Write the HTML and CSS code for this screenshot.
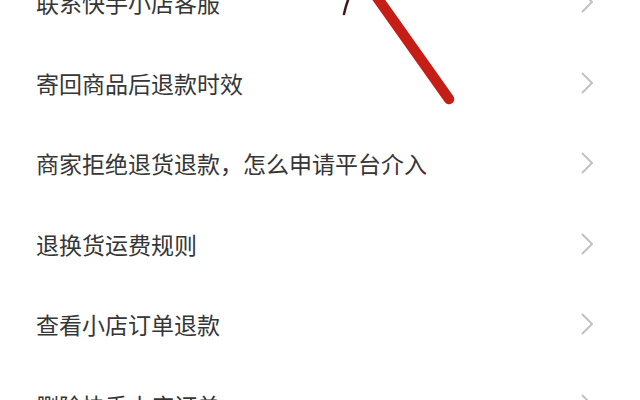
FILE: index.html
```html
<!DOCTYPE html>
<html lang="zh-CN">
<head>
    <meta charset="UTF-8">
    <meta name="viewport" content="width=device-width, initial-scale=1.0">
    <title>退款帮助</title>
    <link rel="stylesheet" href="styles.css">
</head>
<body>
    <div class="page">
        <ul class="help-list">
            <li class="help-item"><span class="help-title">联系快手小店客服</span><svg class="chevron" viewBox="0 0 12 22"><polyline points="1,1 11,11 1,21"/></svg></li>
            <li class="help-item"><span class="help-title">寄回商品后退款时效</span><svg class="chevron" viewBox="0 0 12 22"><polyline points="1,1 11,11 1,21"/></svg></li>
            <li class="help-item"><span class="help-title">商家拒绝退货退款，怎么申请平台介入</span><svg class="chevron" viewBox="0 0 12 22"><polyline points="1,1 11,11 1,21"/></svg></li>
            <li class="help-item"><span class="help-title">退换货运费规则</span><svg class="chevron" viewBox="0 0 12 22"><polyline points="1,1 11,11 1,21"/></svg></li>
            <li class="help-item"><span class="help-title">查看小店订单退款</span><svg class="chevron" viewBox="0 0 12 22"><polyline points="1,1 11,11 1,21"/></svg></li>
            <li class="help-item"><span class="help-title">删除快手小店订单</span><svg class="chevron" viewBox="0 0 12 22"><polyline points="1,1 11,11 1,21"/></svg></li>
        </ul>

        <!-- hand-drawn marker pointing at the first entry -->
        <svg class="marker" width="640" height="400" viewBox="0 0 640 400">
            <path d="M348 0 L346 6 L344 14" stroke="#3a1a1a" stroke-width="2.5" fill="none" stroke-linecap="round"/>
            <line x1="376" y1="-4" x2="449" y2="99" stroke="#c41e16" stroke-width="10.5" stroke-linecap="round"/>
        </svg>
    </div>
</body>
</html>
```

FILE: styles.css
```css
/* Help list */
body {
    margin: 0;
    background-color: #fff;
    font-family: "Noto Sans CJK SC", "Noto Sans", sans-serif;
    overflow: hidden;
}

.page {
    position: relative;
    width: 640px;
    height: 400px;
    overflow: hidden;
}

.help-list {
    list-style: none;
    margin: -38px 0 0 0;
    padding: 0;
}

.help-item {
    display: flex;
    align-items: center;
    justify-content: space-between;
    height: 80.5px;
    padding: 0 47px 0 36px;
}

.help-title {
    font-size: 23px;
    color: #363636;
}

.chevron {
    width: 12px;
    height: 22px;
    fill: none;
    stroke: #c2c2c2;
    stroke-width: 2;
}

.marker {
    position: absolute;
    top: 0;
    left: 0;
    pointer-events: none;
}
```
